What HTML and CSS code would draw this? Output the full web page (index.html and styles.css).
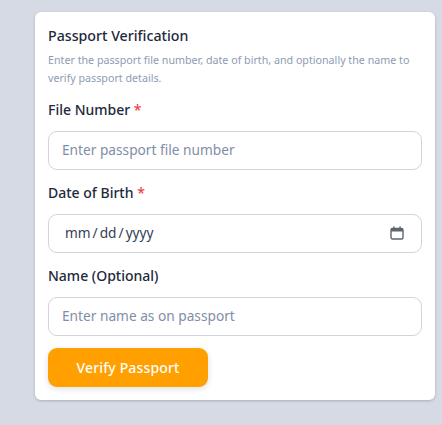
FILE: index.html
```html
<!DOCTYPE html>
<html lang="en">
<head>
  <meta charset="UTF-8" />
  <meta name="viewport" content="width=device-width, initial-scale=1" />
  <title>Passport Verification</title>
  <link rel="stylesheet" href="styles.css">
</head>
<body>
  <div class="card">
    <h2 class="card-title">Passport Verification</h2>
    <p class="card-desc">Enter the passport file number, date of birth, and optionally the name to verify passport details.</p>
    <form>
      <div class="field">
        <label for="fileNumber">File Number <span class="required">*</span></label>
        <input type="text" id="fileNumber" placeholder="Enter passport file number" />
      </div>
      <div class="field">
        <label for="dob">Date of Birth <span class="required">*</span></label>
        <input type="date" id="dob" />
      </div>
      <div class="field">
        <label for="name">Name (Optional)</label>
        <input type="text" id="name" placeholder="Enter name as on passport" />
      </div>
      <button type="submit">Verify Passport</button>
    </form>
  </div>
</body>
</html>
```

FILE: styles.css
```css
html, body {
  height: 100%;
}
body {
  background: #d6dae4;
  font-family: "Noto Sans", sans-serif;
  margin: 0;
  padding: 12px 7px 0 35px;
  box-sizing: border-box;
  overflow: hidden;
}
.card {
  background: #fff;
  border-radius: 6px;
  box-shadow: 0 1px 3px rgba(0,0,0,0.2);
  width: 400px;
  height: 388px;
  padding: 15px 13px 13px 13px;
  box-sizing: border-box;
}
.card-title {
  color: #1e293b;
  font-size: 14.2px;
  font-weight: 500;
  line-height: 18px;
  margin: 0 0 6px 0;
}
.card-desc {
  color: #8e9bb3;
  font-size: 10.7px;
  line-height: 18px;
  margin: 0 0 13px 0;
}
.field {
  margin-bottom: 13.5px;
}
.field:last-of-type {
  margin-bottom: 12.5px;
}
label {
  display: block;
  color: #1e293b;
  font-size: 14px;
  font-weight: 500;
  line-height: 20px;
  margin-bottom: 11px;
}
.required {
  color: #ef4444;
}
input {
  display: block;
  width: 100%;
  height: 38.5px;
  padding: 0 13px 2px 13px;
  border: 1px solid #d1d5db;
  border-radius: 9px;
  font-family: inherit;
  font-size: 13.7px;
  color: #334155;
  background: #fff;
  box-sizing: border-box;
}
input[type="date"] {
  padding-left: 15px;
  padding-right: 17px;
}
input::-webkit-datetime-edit-text {
  padding: 0 1px;
}
input::-webkit-calendar-picker-indicator {
  width: 14px;
  height: 14px;
  padding: 0;
  margin: 2px 0 0 0;
  background: url("data:image/svg+xml,%3Csvg xmlns='http://www.w3.org/2000/svg' viewBox='0 0 14 14'%3E%3Crect x='1' y='2.5' width='12' height='10.5' rx='1.5' fill='none' stroke='%235f6670' stroke-width='1.4'/%3E%3Crect x='1' y='2.5' width='12' height='3' fill='%235f6670'/%3E%3Crect x='3.2' y='0.5' width='1.5' height='3' fill='%235f6670'/%3E%3Crect x='9.3' y='0.5' width='1.5' height='3' fill='%235f6670'/%3E%3C/svg%3E") center no-repeat;
}
input::placeholder {
  color: #7f8ea8;
}
button {
  display: block;
  width: 160px;
  height: 39px;
  background: #ffa000;
  border: none;
  border-radius: 9px;
  color: #fff;
  font-family: inherit;
  font-size: 14px;
  font-weight: 500;
  letter-spacing: 0.15px;
  box-shadow: 0 2px 6px rgba(0,0,0,0.12);
  cursor: pointer;
}
```
